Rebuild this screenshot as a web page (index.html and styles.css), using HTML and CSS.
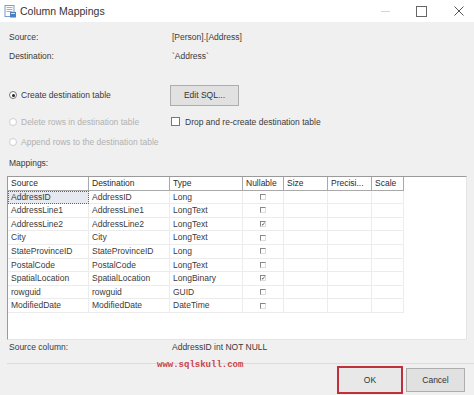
FILE: index.html
```html
<!DOCTYPE html>
<html>
<head>
<meta charset="utf-8">
<link rel="stylesheet" href="styles.css">
</head>
<body>
<div class="window">
  <div class="titlebar">
    <svg class="app-icon" width="13" height="13" viewBox="0 0 13 13">
      <rect x="1" y="0.5" width="9" height="11" fill="#fff" stroke="#7a9cc6"/>
      <rect x="2.5" y="2" width="6" height="1" fill="#9bb3d4"/>
      <rect x="2.5" y="4" width="6" height="1" fill="#9bb3d4"/>
      <rect x="2.5" y="6" width="6" height="1" fill="#9bb3d4"/>
      <rect x="6" y="7" width="6" height="5.5" fill="#4a7fc1"/>
      <rect x="7" y="8" width="4" height="1" fill="#cfe0f5"/>
    </svg>
    <span class="title">Column Mappings</span>
    <div class="controls">
      <span class="ctl min"></span>
      <span class="ctl max"></span>
      <span class="ctl close">
        <svg width="10" height="10" viewBox="0 0 10 10"><path d="M0.5 0.5 L9.5 9.5 M9.5 0.5 L0.5 9.5" stroke="#555" stroke-width="1"/></svg>
      </span>
    </div>
  </div>
  <div class="content">
    <div class="info">
      <span class="lbl">Source:</span><span class="val">[Person].[Address]</span>
      <span class="lbl">Destination:</span><span class="val">`Address`</span>
    </div>
    <div class="options">
      <div class="opt row1"><span class="radio on"></span><span>Create destination table</span></div>
      <div class="opt-right row1"><button class="btn editsql">Edit SQL...</button></div>
      <div class="opt dis row2"><span class="radio"></span><span>Delete rows in destination table</span></div>
      <div class="opt-right row2"><span class="check"></span><span>Drop and re-create destination table</span></div>
      <div class="opt dis row3"><span class="radio"></span><span>Append rows to the destination table</span></div>
    </div>
    <div class="mlabel">Mappings:</div>
    <div class="grid-box">
      <div class="grid">
        <div class="hd">Source</div><div class="hd">Destination</div><div class="hd">Type</div><div class="hd">Nullable</div><div class="hd">Size</div><div class="hd">Precisi...</div><div class="hd">Scale</div>

        <div class="c sel">AddressID</div><div class="c">AddressID</div><div class="c">Long</div><div class="c cb"><span class="mini"></span></div><div class="c"></div><div class="c"></div><div class="c"></div>
        <div class="c">AddressLine1</div><div class="c">AddressLine1</div><div class="c">LongText</div><div class="c cb"><span class="mini"></span></div><div class="c"></div><div class="c"></div><div class="c"></div>
        <div class="c">AddressLine2</div><div class="c">AddressLine2</div><div class="c">LongText</div><div class="c cb"><span class="mini on">✓</span></div><div class="c"></div><div class="c"></div><div class="c"></div>
        <div class="c">City</div><div class="c">City</div><div class="c">LongText</div><div class="c cb"><span class="mini"></span></div><div class="c"></div><div class="c"></div><div class="c"></div>
        <div class="c">StateProvinceID</div><div class="c">StateProvinceID</div><div class="c">Long</div><div class="c cb"><span class="mini"></span></div><div class="c"></div><div class="c"></div><div class="c"></div>
        <div class="c">PostalCode</div><div class="c">PostalCode</div><div class="c">LongText</div><div class="c cb"><span class="mini"></span></div><div class="c"></div><div class="c"></div><div class="c"></div>
        <div class="c">SpatialLocation</div><div class="c">SpatialLocation</div><div class="c">LongBinary</div><div class="c cb"><span class="mini on">✓</span></div><div class="c"></div><div class="c"></div><div class="c"></div>
        <div class="c">rowguid</div><div class="c">rowguid</div><div class="c">GUID</div><div class="c cb"><span class="mini"></span></div><div class="c"></div><div class="c"></div><div class="c"></div>
        <div class="c">ModifiedDate</div><div class="c">ModifiedDate</div><div class="c">DateTime</div><div class="c cb"><span class="mini"></span></div><div class="c"></div><div class="c"></div><div class="c"></div>
      </div>
    </div>
    <div class="info srccol">
      <span class="lbl">Source column:</span><span class="val">AddressID int NOT NULL</span>
    </div>
    <div class="sep"></div>
    <div class="footer">
      <span class="watermark">www.sqlskull.com</span>
      <button class="btn ok">OK</button>
      <button class="btn cancel">Cancel</button>
    </div>
  </div>
</div>
</body>
</html>
```

FILE: styles.css
```css
* { box-sizing: border-box; }
html, body { margin: 0; padding: 0; }
body {
  width: 474px;
  height: 395px;
  overflow: hidden;
  font-family: "Liberation Sans", Arial, sans-serif;
  font-size: 8.5px;
  color: #3a3a3a;
  background: #f0f0f0;
}
.window { display: flex; flex-direction: column; height: 395px; }
.titlebar {
  height: 22px;
  background: #fff;
  display: flex;
  align-items: center;
  padding-left: 4px;
}
.app-icon { flex: none; }
.title { margin-left: 3px; font-size: 10.5px; color: #333; }
.controls { margin-left: auto; display: flex; align-items: center; height: 22px; }
.ctl { height: 22px; display: flex; align-items: center; justify-content: center; }
.ctl.min { width: 26px; }
.ctl.max { width: 46px; }
.ctl.close { width: 30px; }
.ctl.min::before { content: ""; width: 9px; height: 1px; background: #d4d4d4; }
.ctl.max::before { content: ""; width: 9px; height: 9px; border: 1px solid #666; }
.content { flex: 1; display: flex; flex-direction: column; }
.info {
  display: grid;
  grid-template-columns: 163px 1fr;
  row-gap: 9px;
  padding: 10px 0 0 9px;
  line-height: 10px;
}
.options {
  display: grid;
  grid-template-columns: 162px 1fr;
  grid-template-rows: 24px 29px 12px;
  margin-top: 22px;
  padding-left: 9px;
  align-items: center;
}
.opt { display: flex; align-items: center; gap: 4px; }
.opt.dis { color: #b0b0b0; }
.opt-right { display: flex; align-items: center; gap: 5px; }
.radio {
  width: 8px; height: 8px; border-radius: 50%;
  border: 1px solid #cfcfcf; background: #fff;
  display: inline-block; position: relative; flex: none;
}
.radio.on { border-color: #777; }
.radio.on::after {
  content: ""; position: absolute; left: 1.5px; top: 1.5px;
  width: 3px; height: 3px; border-radius: 50%; background: #222;
}
.btn {
  font-family: inherit;
  font-size: 8.5px;
  color: #333;
  background: #e1e1e1;
  border: 1px solid #adadad;
  padding: 0;
}
.editsql { width: 69px; height: 21px; margin-left: -1px; }
.check { width: 9px; height: 9px; border: 1px solid #777; background: #fff; flex: none; }
.mlabel { margin-top: 10px; padding-left: 9px; line-height: 10px; }
.grid-box {
  margin: 8px 7px 0 7px;
  height: 164px;
  background: #fff;
  border: 1px solid #9a9a9a;
  border-right-color: #e4e4e4;
  border-bottom-color: #e4e4e4;
}
.grid {
  display: grid;
  grid-template-columns: 81px 81px 73px 41px 44px 44px 32px;
  grid-auto-rows: 13.6px;
  width: 396px;
}
.hd {
  border-right: 1px solid #a9a9a9;
  border-bottom: 1px solid #a9a9a9;
  padding-left: 3px;
  line-height: 13px;
  color: #2b2b2b;
  background: #fff;
}
.c {
  border-right: 1px solid #ececec;
  border-bottom: 1px solid #ececec;
  padding-left: 3px;
  line-height: 13px;
  white-space: nowrap;
  overflow: hidden;
}
.c.sel {
  background: #e6e9ef;
  outline: 1px dotted #666;
  outline-offset: -1px;
}
.c.cb { display: flex; align-items: center; justify-content: center; padding: 0; }
.mini {
  width: 6px; height: 6px;
  border-left: 1px solid #888; border-top: 1px solid #888;
  border-right: 1px solid #ddd; border-bottom: 1px solid #ddd;
  font-size: 6px; line-height: 5px; color: #333; text-align: center; overflow: hidden;
}
.srccol { padding-top: 2px; }
.sep { margin: 11px 0 0 7px; border-top: 1px solid #dcdcdc; }
.footer {
  display: flex;
  align-items: flex-start;
  padding-right: 9px;
  position: relative;
  height: 31px;
}
.watermark {
  position: absolute;
  left: 157px;
  top: -4px;
  font-family: "Liberation Mono", "DejaVu Sans Mono", monospace;
  font-size: 9px;
  font-weight: bold;
  color: #c8454a;
}
.ok {
  margin-left: auto;
  width: 66px; height: 28px;
  margin-top: 2px;
  border: 2px solid #c0303a;
  background: #e8e8e8;
}
.cancel {
  width: 59px; height: 24px;
  margin-left: 3px;
  margin-top: 4px;
}
```
